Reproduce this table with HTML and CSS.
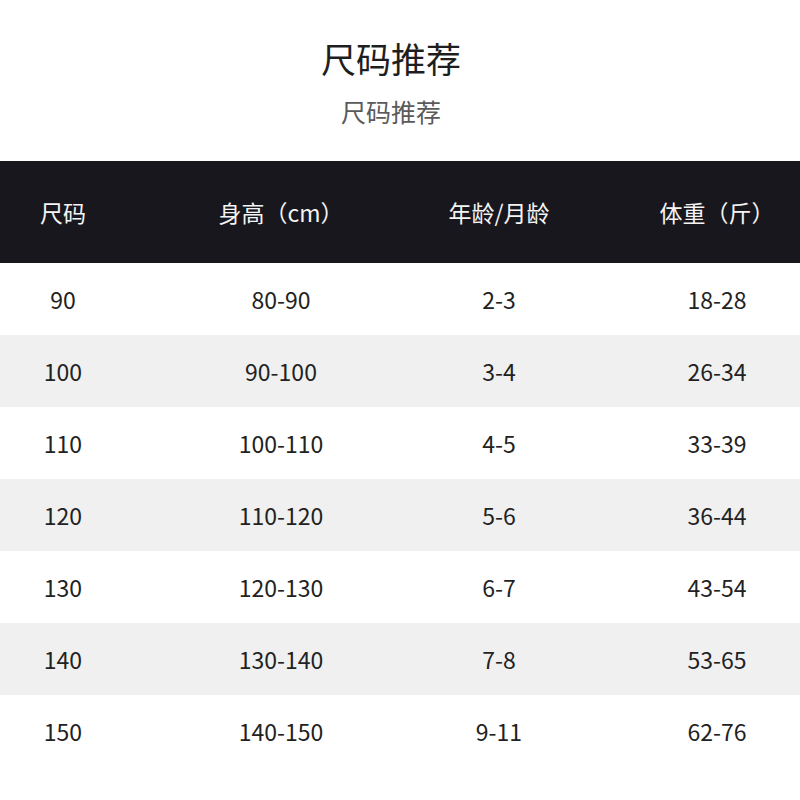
FILE: index.html
```html
<!DOCTYPE html>
<html lang="zh-CN">
<head>
<meta charset="utf-8">
<title>尺码推荐</title>
<link rel="stylesheet" href="styles.css">
</head>
<body>
<div class="page">
  <header class="heading">
    <h1 class="title">尺码推荐</h1>
    <p class="subtitle">尺码推荐</p>
  </header>
  <section class="table">
    <div class="row head">
      <div class="cell">尺码</div>
      <div class="cell">身高（cm）</div>
      <div class="cell">年龄/月龄</div>
      <div class="cell">体重（斤）</div>
    </div>
    <div class="row">
      <div class="cell">90</div><div class="cell">80-90</div><div class="cell">2-3</div><div class="cell">18-28</div>
    </div>
    <div class="row alt">
      <div class="cell">100</div><div class="cell">90-100</div><div class="cell">3-4</div><div class="cell">26-34</div>
    </div>
    <div class="row">
      <div class="cell">110</div><div class="cell">100-110</div><div class="cell">4-5</div><div class="cell">33-39</div>
    </div>
    <div class="row alt">
      <div class="cell">120</div><div class="cell">110-120</div><div class="cell">5-6</div><div class="cell">36-44</div>
    </div>
    <div class="row">
      <div class="cell">130</div><div class="cell">120-130</div><div class="cell">6-7</div><div class="cell">43-54</div>
    </div>
    <div class="row alt">
      <div class="cell">140</div><div class="cell">130-140</div><div class="cell">7-8</div><div class="cell">53-65</div>
    </div>
    <div class="row">
      <div class="cell">150</div><div class="cell">140-150</div><div class="cell">9-11</div><div class="cell">62-76</div>
    </div>
  </section>
</div>
</body>
</html>
```

FILE: styles.css
```css
html, body {
  margin: 0;
  padding: 0;
  background: #ffffff;
}

body {
  font-family: "Noto Sans CJK SC", "Noto Sans", sans-serif;
  color: #222222;
}

.page {
  width: 800px;
  height: 800px;
  overflow: hidden;
}

.heading {
  display: flex;
  flex-direction: column;
  align-items: center;
  padding-top: 36px;
  padding-right: 18px;
}

.title {
  margin: 0;
  font-size: 35px;
  line-height: 44px;
  font-weight: 400;
  color: #1e1e1e;
}

.subtitle {
  margin: 16px 0 0;
  font-size: 25px;
  line-height: 30px;
  color: #5a5a5a;
}

.table {
  margin-top: 35px;
}

.row {
  display: grid;
  grid-template-columns: repeat(4, 126px);
  column-gap: 92px;
  height: 72px;
  align-items: center;
  font-size: 23px;
  color: #222222;
}

.row.head {
  height: 102px;
  background: #19171e;
  color: #f4f4f4;
}

.row.alt {
  background: #f0f0f0;
}

.cell {
  text-align: center;
  white-space: nowrap;
}
```
